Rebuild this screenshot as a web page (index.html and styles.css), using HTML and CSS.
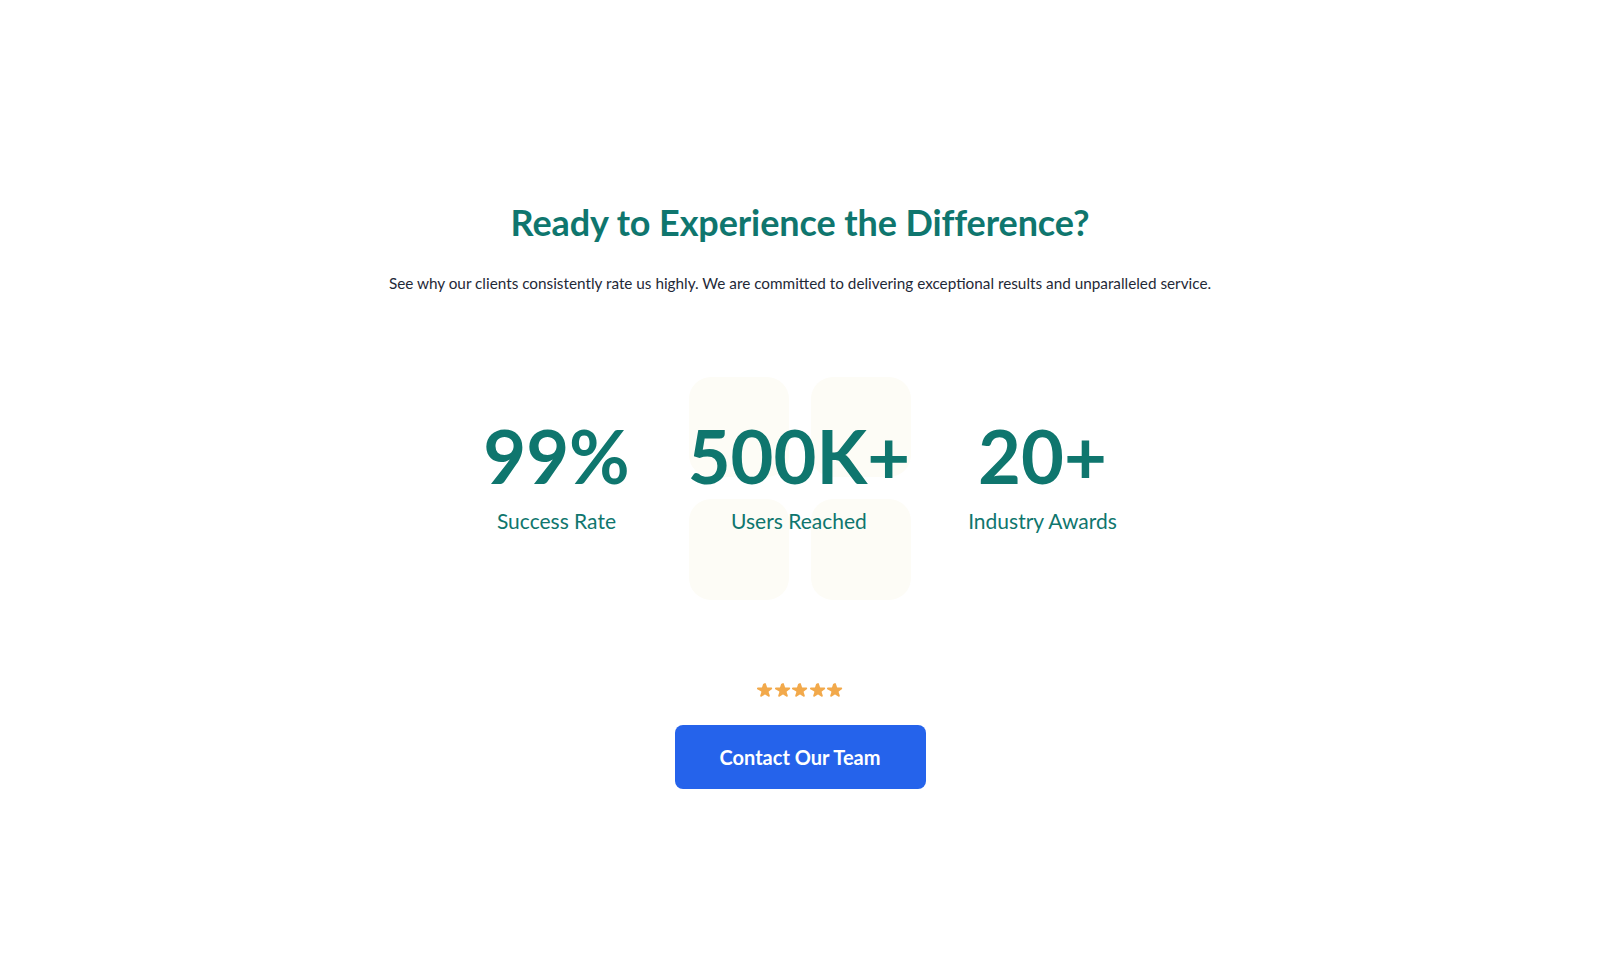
FILE: index.html
```html
<!DOCTYPE html>
<html lang="en">
<head>
<meta charset="utf-8">
<title>Ready to Experience the Difference?</title>
<link rel="stylesheet" href="styles.css">
</head>
<body>
<main class="cta">
  <h1 class="cta-title">Ready to Experience the Difference?</h1>
  <p class="cta-sub">See why our clients consistently rate us highly. We are committed to delivering exceptional results and unparalleled service.</p>

  <section class="stats">
    <div class="tiles" aria-hidden="true">
      <span class="tile"></span><span class="tile"></span>
      <span class="tile"></span><span class="tile"></span>
    </div>
    <div class="stat-row">
      <div class="stat"><div class="stat-num">99%</div><div class="stat-label">Success Rate</div></div>
      <div class="stat"><div class="stat-num">500K+</div><div class="stat-label">Users Reached</div></div>
      <div class="stat"><div class="stat-num">20+</div><div class="stat-label">Industry Awards</div></div>
    </div>
  </section>

  <div class="stars" aria-label="5 stars">
    <svg viewBox="1.7 2.2 16.6 15.3"><path d="M9.05 2.93c.3-.92 1.6-.92 1.9 0l1.07 3.29a1 1 0 0 0 .95.69h3.46c.97 0 1.37 1.24.59 1.81l-2.8 2.03a1 1 0 0 0-.36 1.12l1.07 3.29c.3.92-.76 1.69-1.54 1.12l-2.8-2.03a1 1 0 0 0-1.18 0l-2.8 2.03c-.78.57-1.84-.2-1.540-1.12l1.07-3.29a1 1 0 0 0-.36-1.12L2.03 8.72c-.78-.57-.38-1.81.59-1.81h3.46a1 1 0 0 0 .95-.69l1.07-3.29z"/></svg>
    <svg viewBox="1.7 2.2 16.6 15.3"><path d="M9.05 2.93c.3-.92 1.6-.92 1.9 0l1.07 3.29a1 1 0 0 0 .95.69h3.46c.97 0 1.37 1.24.59 1.81l-2.8 2.03a1 1 0 0 0-.36 1.12l1.07 3.29c.3.92-.76 1.69-1.54 1.12l-2.8-2.03a1 1 0 0 0-1.18 0l-2.8 2.03c-.78.57-1.84-.2-1.54-1.12l1.07-3.29a1 1 0 0 0-.36-1.12L2.03 8.72c-.78-.57-.38-1.81.59-1.81h3.46a1 1 0 0 0 .95-.69l1.07-3.29z"/></svg>
    <svg viewBox="1.7 2.2 16.6 15.3"><path d="M9.05 2.93c.3-.92 1.6-.92 1.9 0l1.07 3.29a1 1 0 0 0 .95.69h3.46c.97 0 1.37 1.24.59 1.81l-2.8 2.03a1 1 0 0 0-.36 1.12l1.07 3.29c.3.92-.76 1.69-1.54 1.12l-2.8-2.03a1 1 0 0 0-1.18 0l-2.8 2.03c-.78.57-1.84-.2-1.54-1.12l1.07-3.29a1 1 0 0 0-.36-1.12L2.03 8.72c-.78-.57-.38-1.81.59-1.81h3.46a1 1 0 0 0 .95-.69l1.07-3.29z"/></svg>
    <svg viewBox="1.7 2.2 16.6 15.3"><path d="M9.05 2.93c.3-.92 1.6-.92 1.9 0l1.07 3.29a1 1 0 0 0 .95.69h3.46c.97 0 1.37 1.24.59 1.81l-2.8 2.03a1 1 0 0 0-.36 1.12l1.07 3.29c.3.92-.76 1.69-1.54 1.12l-2.8-2.03a1 1 0 0 0-1.18 0l-2.8 2.03c-.78.57-1.84-.2-1.54-1.12l1.07-3.29a1 1 0 0 0-.36-1.12L2.03 8.72c-.78-.57-.38-1.81.59-1.81h3.46a1 1 0 0 0 .95-.69l1.07-3.29z"/></svg>
    <svg viewBox="1.7 2.2 16.6 15.3"><path d="M9.05 2.93c.3-.92 1.6-.92 1.9 0l1.07 3.29a1 1 0 0 0 .95.69h3.46c.97 0 1.37 1.24.59 1.81l-2.8 2.03a1 1 0 0 0-.36 1.12l1.07 3.29c.3.92-.76 1.69-1.54 1.12l-2.8-2.03a1 1 0 0 0-1.18 0l-2.8 2.03c-.78.57-1.84-.2-1.54-1.12l1.07-3.29a1 1 0 0 0-.36-1.12L2.03 8.72c-.78-.57-.38-1.81.59-1.81h3.46a1 1 0 0 0 .95-.69l1.07-3.29z"/></svg>
  </div>

  <a class="cta-btn" href="#">Contact Our Team</a>
</main>
</body>
</html>
```

FILE: styles.css
```css
* { box-sizing: border-box; }

html, body {
  margin: 0;
  padding: 0;
  background: #ffffff;
}

body {
  font-family: "Lato", "Noto Sans", "Liberation Sans", sans-serif;
  width: 1600px;
  height: 978px;
  overflow: hidden;
}

.cta {
  display: flex;
  flex-direction: column;
  align-items: center;
  padding-top: 201px;
}

.cta-title {
  margin: 0;
  font-size: 36px;
  line-height: 43px;
  font-weight: 700;
  color: #0f766e;
  letter-spacing: -0.1px;
}

.cta-sub {
  margin: 27px 0 0;
  font-size: 15.3px;
  line-height: 24px;
  color: #1f2937;
}

.stats {
  position: relative;
  margin-top: 82px;
  width: 100%;
  height: 223px;
  padding-top: 42px;
}

.tiles {
  position: absolute;
  top: 0;
  left: 50%;
  transform: translateX(-50%);
  display: grid;
  grid-template-columns: 100px 100px;
  grid-template-rows: 100px 101px;
  gap: 22px;
}

.tile {
  background: #fdfcf6;
  border-radius: 22px;
}

.stat-row {
  position: relative;
  display: flex;
  justify-content: center;
  gap: 58px;
}

.stat {
  display: flex;
  flex-direction: column;
  align-items: center;
}

.stat-num {
  font-size: 74px;
  line-height: 74px;
  font-weight: 700;
  color: #0f766e;
}

.stat-label {
  margin-top: 14px;
  font-size: 21px;
  line-height: 28px;
  color: #0f766e;
}

.stars {
  display: flex;
  gap: 1.5px;
  margin-top: 83px;
}

.stars svg {
  width: 16px;
  height: 14.8px;
  fill: #f2a94b;
}

.cta-btn {
  margin-top: 27px;
  display: flex;
  align-items: center;
  justify-content: center;
  width: 251px;
  height: 64px;
  background: #2563eb;
  border-radius: 8px;
  color: #ffffff;
  font-size: 20px;
  font-weight: 700;
  text-decoration: none;
}
```
